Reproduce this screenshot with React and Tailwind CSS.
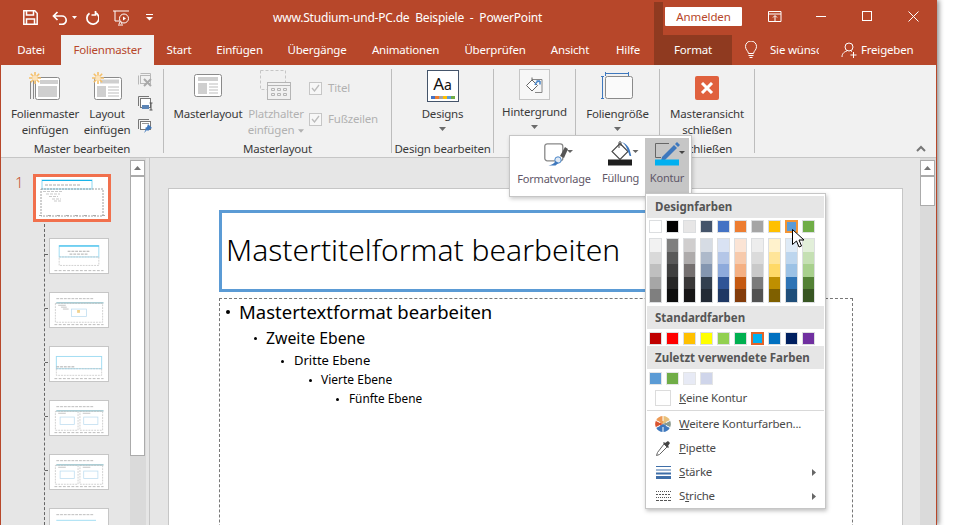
import React from "react";

const Tri = ({ c = "#6b6b6b", w = 7, h = 4, cls = "" }) => (
  <svg width={w} height={h} viewBox="0 0 7 4" className={cls}><path d="M0 0h7L3.500 4z" fill={c} /></svg>
);

const Sun = ({ x, y }) => (
  <g stroke="#F5C06A" strokeWidth="1.600" transform={`translate(${x} ${y})`}>
    <path d="M-6 0H6M0-6V6M-4.200-4.200L4.200 4.200M-4.200 4.200L4.200-4.200" />
    <circle r="2.600" fill="#FBE3BC" stroke="none" />
  </g>
);

const MasterIcon = () => (
  <svg width="34" height="30" viewBox="0 0 34 30">
    <path d="M2.500 10v18M5.500 8v20" stroke="#8a8a8a" fill="none" />
    <rect x="7.500" y="6.500" width="24" height="22" rx="2" fill="#fff" stroke="#8a8a8a" />
    <rect x="12" y="9" width="18" height="4" fill="#cfcfcf" />
    <rect x="10" y="15" width="19" height="11" fill="#cfcfcf" />
    <Sun x={7} y={7} />
  </svg>
);

const LayoutIcon = () => (
  <svg width="32" height="30" viewBox="0 0 32 30">
    <rect x="3.500" y="6.500" width="27" height="22" rx="2" fill="#fff" stroke="#8a8a8a" />
    <rect x="9" y="8.500" width="19" height="4" fill="#cfcfcf" />
    <rect x="6" y="15" width="9" height="11" fill="#cfcfcf" />
    <path d="M17 16h11M17 19h11M17 22h11M17 25h11" stroke="#bdbdbd" />
    <Sun x={7} y={7} />
  </svg>
);

const MasterLayoutIcon = () => (
  <svg width="28" height="24" viewBox="0 0 28 24">
    <rect x=".5" y=".5" width="27" height="22" rx="2" fill="#fff" stroke="#8a8a8a" />
    <rect x="4" y="3" width="20" height="4" fill="#cfcfcf" />
    <rect x="4" y="9" width="9" height="11" fill="#cfcfcf" />
    <path d="M15 10h9M15 13h9M15 16h9M15 19h9" stroke="#bdbdbd" />
  </svg>
);

const PlatzIcon = () => (
  <svg width="32" height="31" viewBox="0 0 32 31">
    <rect x=".5" y=".5" width="25" height="19" fill="none" stroke="#c6c6c6" strokeDasharray="3 2" />
    <rect x="7.500" y="12.500" width="23" height="17" fill="#f1f1f1" stroke="#b5b5b5" />
    <path d="M8 15.500h22" stroke="#b5b5b5" />
    <path d="M11.500 18.500h3v2h-3zM17.500 18.500h3v2h-3zM23.500 18.500h3v2h-3zM11.500 23.500h3v2h-3zM17.500 23.500h3v2h-3zM23.500 23.500h3v2h-3z" fill="none" stroke="#b5b5b5" />
  </svg>
);

const SmallDel = () => (
  <svg width="16" height="16" viewBox="0 0 16 16">
    <path d="M1.500 3.500v9M3.500 1.500h10v9" fill="none" stroke="#b8b8b8" />
    <rect x="3.500" y="3.500" width="10" height="8" fill="#f1f1f1" stroke="#b8b8b8" />
    <path d="M7 7l7 7M14 7l-7 7" stroke="#a9a9a9" strokeWidth="2" />
  </svg>
);
const SmallRename = () => (
  <svg width="16" height="16" viewBox="0 0 16 16">
    <path d="M1.500 11V1.500H12" fill="none" stroke="#777" />
    <rect x="3.500" y="3.500" width="10" height="9" fill="#fff" stroke="#777" />
    <rect x="5" y="10" width="7" height="4" fill="#5c85b6" />
    <path d="M14 8v7M12.500 8h3M12.500 15h3" stroke="#555" fill="none" />
  </svg>
);
const SmallPin = () => (
  <svg width="16" height="16" viewBox="0 0 16 16">
    <path d="M1.500 11V1.500H12" fill="none" stroke="#777" />
    <rect x="3.500" y="3.500" width="10" height="8" fill="#fff" stroke="#777" />
    <path d="M5 5.500h7" stroke="#999" />
    <path d="M11 6l4 4-2 1-2 2-1-1-3 3 2-4-1-1 2-1z" fill="#3f78bd" />
  </svg>
);

const DesignsIcon = () => (
  <div className="w-[32px] h-[32px] border border-[#44546a] bg-white flex flex-col items-center">
    <div className="text-[17px] leading-[20px] mt-[3px] text-[#111] whitespace-nowrap tracking-normal">A<span className="text-[14px]">a</span></div>
    <div className="flex mt-[1px]">
      {["#4472c4", "#ed7d31", "#a5a5a5", "#ffc000", "#5b9bd5", "#70ad47"].map((c) => (
        <span key={c} className="w-[4px] h-[3px]" style={{ background: c }} />
      ))}
    </div>
  </div>
);

const HintIcon = () => (
  <div className="w-[31px] h-[31px] border border-[#c6c6c6] bg-[#f7f7f7] flex items-center justify-center">
    <svg width="17" height="17" viewBox="0 0 17 17">
      <path d="M6 3.500h10v13H9" fill="none" stroke="#888" />
      <path d="M6 4l-5.500 5.500 5.500 5.500 5.500-5.500z" fill="#fff" stroke="#666" />
      <path d="M6 4V1.500" stroke="#666" />
      <path d="M9 9c1-3 3-4 5-4M14 5v3.500M10.500 5H14" stroke="#4a86c8" strokeWidth="1.500" fill="none" />
    </svg>
  </div>
);

const SizeIcon = () => (
  <svg width="33" height="29" viewBox="0 0 33 29">
    <path d="M4.500 1v4M27.500 1v4M4.500 2.500h23" stroke="#3f78bd" fill="none" />
    <path d="M0 5.500h3M0 27.500h3M1.500 5.500v22" stroke="#3f78bd" fill="none" />
    <rect x="4.500" y="5.500" width="27" height="22" rx="2" fill="#fafafa" stroke="#8a8a8a" />
  </svg>
);

const CloseIcon = () => (
  <div className="w-[24px] h-[24px] mt-[4px] rounded-[2px] bg-[#E0613E] flex items-center justify-center">
    <svg width="14" height="12" viewBox="0 0 14 12"><path d="M2 1l10 10M12 1L2 11" stroke="#fff" strokeWidth="3" /></svg>
  </div>
);

const Big = ({ w, area = 41, icon, lines, arrow, dim }) => (
  <div className="flex flex-col items-center shrink-0" style={{ width: w }}>
    <div className="flex items-center justify-center" style={{ height: area }}>{icon}</div>
    {lines.map((l) => (
      <div key={l} className={`text-[11.500px] tracking-[-0.2px] leading-[16px] whitespace-nowrap ${dim ? "text-[#b1b1b1]" : "text-[#3a3a3a]"}`}>
        {l}
        {dim && l.startsWith("einf") && <Tri c="#b1b1b1" w={6} cls="inline ml-[4px] align-middle" />}
      </div>
    ))}
    {arrow && <Tri cls="mt-[5px]" />}
  </div>
);

const Group = ({ w, label, children, cls = "" }) => (
  <>
    <div className="flex flex-col shrink-0 h-full" style={{ width: w }}>
      <div className={`h-[77px] flex ${cls}`}>{children}</div>
      <div className="h-[14px] text-[11.500px] tracking-[-0.2px] leading-[14px] text-[#3a3a3a] text-center whitespace-nowrap">{label}</div>
    </div>
    <div className="w-px h-[84px] mt-[4px] bg-[#bdbdbd] shrink-0" />
  </>
);

const Check = ({ label }) => (
  <div className="flex items-center gap-[6px]">
    <div className="w-[13px] h-[13px] border border-[#c6c6c6] bg-[#f7f7f7] flex items-center justify-center">
      <svg width="9" height="8" viewBox="0 0 9 8"><path d="M1 4l2.500 3L8 1" fill="none" stroke="#bcbcbc" strokeWidth="1.300" /></svg>
    </div>
    <span className="text-[11.500px] tracking-[-0.2px] text-[#b1b1b1] leading-[16px]">{label}</span>
  </div>
);

const TABS = [
  ["Datei", 60, 1], ["Folienmaster", 93, 2], ["Start", 50, 0], ["Einfügen", 71, 0], ["Übergänge", 84, 0],
  ["Animationen", 93, 0], ["Überprüfen", 86, 0], ["Ansicht", 64, 0], ["Hilfe", 52, 0],
];

const TitleBar = () => (
  <div className="h-[35px] flex items-center relative shrink-0">
    <div className="flex items-center w-[272px] h-full shrink-0">
      <svg className="ml-[22px]" width="15" height="15" viewBox="0 0 15 15"><path d="M.8.8h11l2.400 2.400v11H.8z" fill="none" stroke="#fff" strokeWidth="1.500" /><path d="M3.500 1v4h7V1M3.500 14V9h8v5" fill="none" stroke="#fff" strokeWidth="1.500" /></svg>
      <svg className="ml-[14px]" width="16" height="14" viewBox="0 0 16 14"><path d="M5.500 1L1.500 5l4 4M2 5h8a4.200 4.200 0 010 8.400H7" fill="none" stroke="#fff" strokeWidth="1.700" /></svg>
      <Tri c="#fff" w={5} h={3} cls="ml-[4px]" />
      <svg className="ml-[8px]" width="14" height="14" viewBox="0 0 14 14"><path d="M4.500 2.200A6 6 0 1010 1.500M10.500 0v4H6.500" fill="none" stroke="#fff" strokeWidth="1.700" /></svg>
      <svg className="ml-[14px]" width="17" height="16" viewBox="0 0 17 16"><path d="M0 1h16M2 1v10h5M6 14l1.500-3 1.500 3M5 15h5" fill="none" stroke="#fff" /><circle cx="11" cy="8.500" r="4.500" fill="#B7472A" stroke="#fff" /><path d="M10 6.500l3 2-3 2z" fill="#fff" /></svg>
      <svg className="ml-[16px]" width="7" height="7" viewBox="0 0 7 7"><path d="M0 .5h7" stroke="#fff" /><path d="M0 3h7L3.500 6.500z" fill="#fff" /></svg>
    </div>
    <div className="text-[12px] text-white whitespace-pre tracking-[-0.2px]">www.Studium-und-PC.de  Beispiele  -  PowerPoint</div>
    <div className="absolute left-[653px] top-[2px] w-[9px] h-[33px] bg-[#8F3A20]" />
    <div className="absolute left-[664px] top-[7px] w-[77px] h-[19px] bg-white rounded-[1px] text-[#B7472A] text-[11.500px] tracking-[-0.1px] leading-[19px] text-center">Anmelden</div>
    <svg className="absolute left-[767px] top-[11px]" width="14" height="12" viewBox="0 0 14 12"><path d="M.5.500h12.500v10H.5zM.5 3h12.500M7 10V5M5 6.500L7 4.500l2 2" fill="none" stroke="#fff" /></svg>
    <div className="absolute left-[815px] top-[16px] w-[10px] h-px bg-white" />
    <div className="absolute left-[861px] top-[11px] w-[10px] h-[10px] border border-white" />
    <svg className="absolute left-[907px] top-[11px]" width="11" height="11" viewBox="0 0 11 11"><path d="M.5.500l10 10M10.500.500l-10 10" stroke="#fff" /></svg>
  </div>
);

const Tabs = () => (
  <div className="h-[30px] flex shrink-0 text-[11.500px] tracking-[-0.2px] leading-[30px] text-white">
    {TABS.map(([t, w, k]) => (
      <div key={t} style={{ width: w }} className={`shrink-0 text-center whitespace-nowrap ${k === 2 ? "bg-[#F1F1F1] text-[#B7472A]" : ""}`}>{t}</div>
    ))}
    <div className="w-[78px] bg-[#8F3A20] text-center shrink-0">Format</div>
    <svg className="ml-[13px] mt-[6px] shrink-0" width="12" height="18" viewBox="0 0 12 18"><path d="M3.500 12.500C3 9.500.5 9 .5 5.500a5.500 5.500 0 0111 0c0 3.500-2.500 4-3 7zM3.500 14.500h5M4.500 16.500h3" fill="none" stroke="#fff" /></svg>
    <div className="ml-[13px] w-[49px] overflow-hidden whitespace-nowrap shrink-0">Sie wünschen</div>
    <svg className="ml-[22px] mt-[7px] shrink-0" width="17" height="17" viewBox="0 0 17 17"><circle cx="8" cy="5" r="4" fill="none" stroke="#fff" /><path d="M1 15c0-4 3-5.500 5-6M10 9l1 .5M12.500 10v6M9.500 13h6" fill="none" stroke="#fff" /></svg>
    <div className="ml-[3px] whitespace-nowrap shrink-0">Freigeben</div>
  </div>
);

const Ribbon = () => (
  <div className="h-[92px] bg-[#F1F1F1] border-b border-[#c6c6c6] flex relative shrink-0 box-content">
    <Group w={162} label="Master bearbeiten">
      <div className="w-[8px]" />
      <Big w={72} icon={<MasterIcon />} lines={["Folienmaster", "einfügen"]} />
      <Big w={52} icon={<LayoutIcon />} lines={["Layout", "einfügen"]} />
      <div className="flex flex-col items-center w-[24px] pt-[7px] gap-[7px]">
        <SmallDel /><SmallRename /><SmallPin />
      </div>
    </Group>
    <Group w={227} label="Masterlayout">
      <Big w={88} icon={<MasterLayoutIcon />} lines={["Masterlayout"]} />
      <Big w={48} icon={<PlatzIcon />} lines={["Platzhalter", "einfügen"]} dim />
      <div className="flex flex-col ml-[9px] pt-[15px] gap-[15px]">
        <Check label="Titel" /><Check label="Fußzeilen" />
      </div>
    </Group>
    <Group w={101} label="Design bearbeiten" cls="justify-center">
      <Big w={60} icon={<DesignsIcon />} lines={["Designs"]} arrow />
    </Group>
    <Group w={81} cls="justify-center" label="">
      <Big w={70} area={39} icon={<HintIcon />} lines={["Hintergrund"]} arrow />
    </Group>
    <Group w={83} cls="justify-center" label="">
      <Big w={70} icon={<SizeIcon />} lines={["Foliengröße"]} arrow />
    </Group>
    <Group w={94} label="Schließen" cls="justify-center">
      <Big w={80} icon={<CloseIcon />} lines={["Masteransicht", "schließen"]} />
    </Group>
    <svg className="absolute left-[915px] top-[80px]" width="10" height="7" viewBox="0 0 10 7"><path d="M1 6l4-4 4 4" fill="none" stroke="#777" strokeWidth="2" /></svg>
  </div>
);

const Thumb = ({ kind }) => {
  const g = "#a9a9a9";
  const c = "#9fdcf2";
  const foot = <path d="M4 33.500H56" stroke="#999" strokeDasharray="3 1.500" strokeWidth=".7" />;
  const dash = { fill: "none", stroke: "#bbb", strokeDasharray: "2 1", strokeWidth: ".7" };
  return (
    <svg width="58" height="34" viewBox="0 0 60 36" className="block">
      {kind === 0 && (<>
        <rect x="9" y="7" width="42" height="12" fill="none" stroke={c} />
        <path d="M9 7.500h42" stroke="#19b4ea" />
        <path d="M18 13h24M20 16h20" stroke={g} strokeDasharray="3 1" />
        <rect x="9" y="19" width="42" height="9" {...dash} />
      </>)}
      {kind === 1 && (<>
        <path d="M6 6h40" stroke={g} strokeDasharray="3 1" strokeWidth=".8" />
        <path d="M6 10.500h50" stroke="#6aa9b8" />
        <rect x="5" y="11" width="50" height="20" {...dash} />
        <path d="M8 13h8M11 15h6M13 17h6" stroke={g} strokeWidth=".7" />
        <rect x="22" y="17" width="16" height="8" fill="none" stroke="#bcdcf0" strokeWidth=".8" />
        <rect x="28" y="18" width="3" height="3" fill="#f2d28d" />
      </>)}
      {kind === 2 && (<>
        <rect x="6" y="10" width="48" height="13" fill="none" stroke={c} />
        <path d="M6 21h20" stroke={g} strokeDasharray="3 1" />
        <rect x="6" y="23" width="48" height="7" {...dash} />
      </>)}
      {kind >= 3 && (<>
        <path d="M6 6h40" stroke={g} strokeDasharray="3 1" strokeWidth=".8" />
        <path d={kind === 5 ? "M6 12h42" : "M6 10.500h50"} stroke={kind === 5 ? c : "#6aa9b8"} />
        {kind !== 5 && <>
          <rect x="5" y="11" width="24" height="20" {...dash} />
          <rect x="31" y="11" width="24" height="20" {...dash} />
          <rect x="10" y="17" width="15" height="8" fill="none" stroke="#bcdcf0" strokeWidth=".8" />
          <rect x="35" y="17" width="15" height="8" fill="none" stroke="#bcdcf0" strokeWidth=".8" />
          <path d="M8 13h8M34 13h8" stroke={g} strokeWidth=".7" />
        </>}
      </>)}
      {foot}
    </svg>
  );
};

const Panel = () => (
  <div className="w-[148px] shrink-0 flex relative overflow-hidden">
    <div className="w-[129px] shrink-0 pt-[16px] relative">
      <div className="flex">
        <div className="w-[32px] text-[15px] font-light leading-[16px] text-[#C5512F] pl-[14px]">1</div>
        <div className="w-[78px] h-[48px] border-[3px] border-[#F1704D] bg-white">
          <svg width="72" height="42" viewBox="0 0 72 42" className="block">
            <rect x="6" y="3" width="50" height="9" fill="none" stroke="#8fd8f2" />
            <path d="M6 3.500h50" stroke="#19b4ea" />
            <path d="M9 8h36" stroke="#aaa" strokeDasharray="3 1" />
            <rect x="5" y="12" width="62" height="27" fill="none" stroke="#888" strokeDasharray="2 1" strokeWidth=".8" />
            <path d="M7 14.500h20M10 17h14M13 19.500h9M16 22h9M18 24h7" stroke="#bbb" strokeDasharray="3 1" strokeWidth=".8" />
            <path d="M3 38.500h66" stroke="#aaa" strokeDasharray="3 6" />
          </svg>
        </div>
      </div>
      <div className="flex flex-col gap-[18px] mt-[16px] ml-[48px]">
        {[0, 1, 2, 3, 4, 5].map((k) => (
          <div key={k} className="w-[60px] h-[36px] border border-[#c6c6c6] bg-white shrink-0"><Thumb kind={k} /></div>
        ))}
      </div>
      <div className="absolute left-[43px] top-[66px] bottom-0 border-l border-dashed border-[#666]" />
      {[96, 150, 204, 258, 312].map((t) => (
        <div key={t} className="absolute left-[44px] w-[3px] h-px bg-[#666]" style={{ top: t }} />
      ))}
    </div>
    <div className="w-[16px] bg-[#DADADA] shrink-0 flex flex-col pt-[2px]">
      <div className="w-[15px] h-[16px] border border-[#ababab] bg-white flex items-center justify-center"><Tri c="#777" cls="rotate-180" /></div>
      <div className="w-[15px] h-[280px] border border-[#ababab] bg-white" />
    </div>
  </div>
);

const Lvl = ({ ml, gap, cls, h, dot, children }) => (
  <div className={`flex items-center whitespace-nowrap text-black ${cls}`} style={{ height: h, paddingLeft: ml }}>
    <span className="rounded-full bg-black shrink-0" style={{ width: dot, height: dot, marginRight: gap }} />
    {children}
  </div>
);

const Slide = () => (
  <div className="flex-1 flex overflow-hidden">
    <div className="flex-1 pl-[18px] pt-[30px] overflow-hidden">
      <div className="w-[735px] h-[400px] bg-white border border-[#c6c6c6] pl-[50px] pt-[21px]">
        <div className="w-[480px] h-[82px] border-[3px] border-[#5B9BD5] pl-[4px] pb-[4px] flex items-center text-[30px] font-light text-black whitespace-nowrap">Mastertitelformat bearbeiten</div>
        <div className="w-[634px] h-[300px] mt-[6px] border border-dashed border-[#777]">
          <Lvl ml={6} gap={9} dot={4} h={26} cls="text-[18.500px]">Mastertextformat bearbeiten</Lvl>
          <Lvl ml={34} gap={9} dot={3} h={27} cls="text-[15.800px]">Zweite Ebene</Lvl>
          <Lvl ml={61} gap={10} dot={3} h={18} cls="text-[13px]">Dritte Ebene</Lvl>
          <Lvl ml={89} gap={9} dot={3} h={20} cls="text-[12px]">Vierte Ebene</Lvl>
          <Lvl ml={116} gap={10} dot={3} h={18} cls="text-[11.800px]">Fünfte Ebene</Lvl>
        </div>
      </div>
    </div>
    <div className="w-[16px] bg-[#DADADA] shrink-0 flex flex-col pt-[2px]">
      <div className="w-[15px] h-[16px] border border-[#ababab] bg-white flex items-center justify-center"><Tri c="#777" cls="rotate-180" /></div>
      <div className="w-[15px] h-[30px] border border-[#ababab] bg-white" />
    </div>
  </div>
);

const MiniToolbar = () => (
  <div className="absolute left-[509px] top-[135px] w-[183px] h-[62px] bg-white border border-[#c6c6c6] shadow-[1px_2px_4px_rgba(0,0,0,0.2)] flex pl-[2px] pt-[2px] text-[11px] tracking-[-0.2px] text-[#5f5768]">
    <div className="w-[84px] flex flex-col items-center">
      <svg className="mt-[5px] ml-[14px]" width="34" height="24" viewBox="0 0 34 24">
        <rect x=".8" y=".8" width="18" height="17" rx="2.500" fill="none" stroke="#888" strokeWidth="1.300" />
        <path d="M16 13l5-9 3 2-4 9z" fill="#555" />
        <circle cx="14" cy="17" r="3.200" fill="#dfe9f5" stroke="#4a86c8" />
        <path d="M11.500 18c-1 2-3 3.500-7 4.500h7l3-2.500z" fill="#3f78bd" />
        <path d="M23 7h6l-3 3z" fill="#666" />
      </svg>
      <div className="mt-[4px] leading-[16px] whitespace-nowrap">Formatvorlage</div>
    </div>
    <div className="w-[49px] flex flex-col items-center">
      <svg className="mt-[3px] ml-[8px]" width="36" height="26" viewBox="0 0 36 26">
        <path d="M13 2.500l8 8-8 8-8-8z" fill="#fff" stroke="#444" strokeWidth="1.100" />
        <path d="M12 7V2c0-2 2-2 2 0v3" fill="none" stroke="#444" />
        <path d="M14 1c5 1 8 5 9 9l1 4c1 1-2 2-2-1l-2-5c-1-3-3-6-6-7z" fill="#3f78bd" />
        <rect x="1" y="18.500" width="24" height="6" fill="#1f1f1f" />
        <path d="M25.500 9h6l-3 3z" fill="#666" />
      </svg>
      <div className="mt-[3px] leading-[16px]">Füllung</div>
    </div>
    <div className="w-[44px] h-[55px] bg-[#c6c6c6] flex flex-col items-center">
      <svg className="mt-[3px] ml-[10px]" width="34" height="26" viewBox="0 0 34 26">
        <path d="M14 2.500H.5v14H6" fill="none" stroke="#666" />
        <path d="M7 16L19 4l3 3-12 12-4 1z" fill="#3f78bd" /><path d="M20 3l2-2 3 3-2 2z" fill="#3f78bd" />
        <rect x="0" y="18.500" width="24" height="6" fill="#00B0F0" />
        <path d="M24 10h6l-3 3z" fill="#444" />
      </svg>
      <div className="mt-[3px] leading-[16px]">Kontur</div>
    </div>
  </div>
);

const Sw = ({ c, sel }) => (
  <div className="w-[13px] h-[13px] border shrink-0" style={{ background: c, borderColor: sel || "#dcdee0", borderWidth: sel ? 2 : 1 }} />
);

const THEME = ["#FFFFFF", "#000000", "#E7E6E6", "#44546A", "#4472C4", "#ED7D31", "#A5A5A5", "#FFC000", "#5B9BD5", "#70AD47"];
const TINTS = [
  ["#F2F2F2", "#D9D9D9", "#BFBFBF", "#A6A6A6", "#7F7F7F"],
  ["#7F7F7F", "#595959", "#3F3F3F", "#262626", "#0D0D0D"],
  ["#D0CECE", "#AEABAB", "#757070", "#3A3838", "#171616"],
  ["#D6DCE4", "#ADB9CA", "#8496B0", "#323F4F", "#222A35"],
  ["#D9E2F3", "#B4C6E7", "#8EAADB", "#2F5496", "#1F3864"],
  ["#FBE4D5", "#F7CAAC", "#F4B083", "#C45911", "#833C0B"],
  ["#EDEDED", "#DBDBDB", "#C9C9C9", "#7B7B7B", "#525252"],
  ["#FFF2CC", "#FFE599", "#FFD966", "#BF8F00", "#7F6000"],
  ["#DEEAF6", "#BDD6EE", "#9CC2E5", "#2E74B5", "#1F4E79"],
  ["#E2EFD9", "#C5E0B3", "#A8D08D", "#538135", "#385623"],
];
const STD = ["#C00000", "#FF0000", "#FFC000", "#FFFF00", "#92D050", "#00B050", "#00B0F0", "#0070C0", "#002060", "#7030A0"];

const Hd = ({ children, h }) => (
  <div className="mx-[1px] bg-[#E6E6E6] pl-[8px] font-bold text-[11.500px] text-[#555]" style={{ height: h, lineHeight: `${h}px` }}>{children}</div>
);

const Row = ({ icon, u, pre = "", rest, arrow }) => (
  <div className="h-[24px] flex items-center text-[11.500px] tracking-[-0.2px] text-[#4a4a4a] shrink-0">
    <div className="w-[33px] flex justify-center shrink-0 pl-[1px]">{icon}</div>
    <span className="whitespace-nowrap">{pre}<span className="underline">{u}</span>{rest}</span>
    {arrow && <svg className="ml-auto mr-[9px]" width="4" height="7" viewBox="0 0 4 7"><path d="M0 0l4 3.500L0 7z" fill="#666" /></svg>}
  </div>
);

const Menu = () => (
  <div className="absolute left-[645px] top-[193px] w-[181px] h-[316px] bg-white border border-[#c6c6c6] shadow-[1px_2px_4px_rgba(0,0,0,0.25)] pt-[2px]">
    <Hd h={22}>Designfarben</Hd>
    <div className="flex gap-[4px] pl-[3px] pt-[2px]">
      {THEME.map((c, i) => <Sw key={c} c={c} sel={i === 8 ? "#F29536" : undefined} />)}
    </div>
    <div className="flex gap-[4px] pl-[3px] pt-[5px]">
      {TINTS.map((col, i) => (
        <div key={i} className="w-[13px] h-[65px] border border-[#dcdee0] flex flex-col">
          {col.map((c) => <div key={c} className="flex-1" style={{ background: c }} />)}
        </div>
      ))}
    </div>
    <div className="h-[3px]" />
    <Hd h={23}>Standardfarben</Hd>
    <div className="flex gap-[4px] pl-[3px] pt-[3px] pb-[1px]">
      {STD.map((c, i) => <Sw key={c} c={c} sel={i === 6 ? "#E2642A" : undefined} />)}
    </div>
    <Hd h={23}>Zuletzt verwendete Farben</Hd>
    <div className="flex gap-[4px] pl-[3px] pt-[3px]">
      {["#5B9BD5", "#70AD47", "#E7EAF5", "#CFD5EA"].map((c) => (
        <div key={c} className="w-[13px] h-[13px] border border-[#e4e5e6]" style={{ background: c }} />
      ))}
    </div>
    <div className="h-[1px]" />
    <Row icon={<div className="w-[16px] h-[16px] border border-[#dcdcdc] bg-white" />} u="K" rest="eine Kontur" />
    <div className="h-px bg-[#d9d9d9] mx-[1px]" />
    <div className="h-[1px]" />
    <Row u="W" rest="eitere Konturfarben..." icon={
      <svg width="16" height="16" viewBox="0 0 16 16">
        <path d="M8 8V0a8 8 0 017 4.500z" fill="#E9C07A" /><path d="M8 8l7-3.500a8 8 0 010 7z" fill="#8a9a8f" />
        <path d="M8 8l7 3.500A8 8 0 018 16z" fill="#3f78bd" /><path d="M8 8v8a8 8 0 01-7-4.500z" fill="#3f78bd" />
        <path d="M8 8l-7 3.500a8 8 0 010-7z" fill="#D9542F" /><path d="M8 8L1 4.500A8 8 0 018 0z" fill="#EE9A55" />
        <path d="M8 0v5M8 11v5M1 4.500l4 2M11 9.500l4 2M1 11.500l4-2M11 6.500l4-2" stroke="#fff" />
      </svg>
    } />
    <Row u="P" rest="ipette" icon={
      <svg width="16" height="16" viewBox="0 0 16 16">
        <path d="M9 4l3 3-7.500 7.500-3 1 1-3z" fill="#fff" stroke="#666" />
        <path d="M8 3l5 5 1-1-1-1 2-3-2-2-3 2-1-1z" fill="#444" />
      </svg>
    } />
    <Row u="S" rest="tärke" arrow icon={
      <svg width="15" height="13" viewBox="0 0 15 13"><path d="M0 .5h15M0 4h15" stroke="#3f6ea8" /><rect y="6.500" width="15" height="2" fill="#3f6ea8" /><rect y="10" width="15" height="3" fill="#3f6ea8" /></svg>
    } />
    <Row pre="S" u="t" rest="riche" arrow icon={
      <svg width="15" height="10" viewBox="0 0 15 10"><path d="M0 .5h15" stroke="#555" strokeDasharray="1 1" /><path d="M0 3.500h15" stroke="#555" strokeDasharray="2 1" /><path d="M0 6.500h15" stroke="#555" strokeDasharray="1 1" /><path d="M0 9.500h15" stroke="#555" strokeDasharray="3 1" /></svg>
    } />
  </div>
);

export default function App() {
  return (
    <div className="relative w-[958px] h-[525px] overflow-hidden bg-white font-['Noto_Sans',sans-serif]">
      <div className="w-[937px] h-[525px] bg-[#B7472A] border-x border-[#B7472A] flex flex-col shadow-[2px_0_5px_rgba(0,0,0,0.45)]">
        <TitleBar />
        <Tabs />
        <Ribbon />
        <div className="flex-1 flex bg-[#E6E6E6] overflow-hidden">
          <Panel />
          <div className="w-px bg-[#c6c6c6] shrink-0" />
          <Slide />
        </div>
      </div>
      <MiniToolbar />
      <Menu />
      <svg className="absolute left-[792px] top-[229px]" width="13" height="20" viewBox="0 0 13 20">
        <path d="M.5.500v15l4-3.500 2.500 6 2.500-1-2.500-6h5z" fill="#fff" stroke="#000" />
      </svg>
    </div>
  );
}
